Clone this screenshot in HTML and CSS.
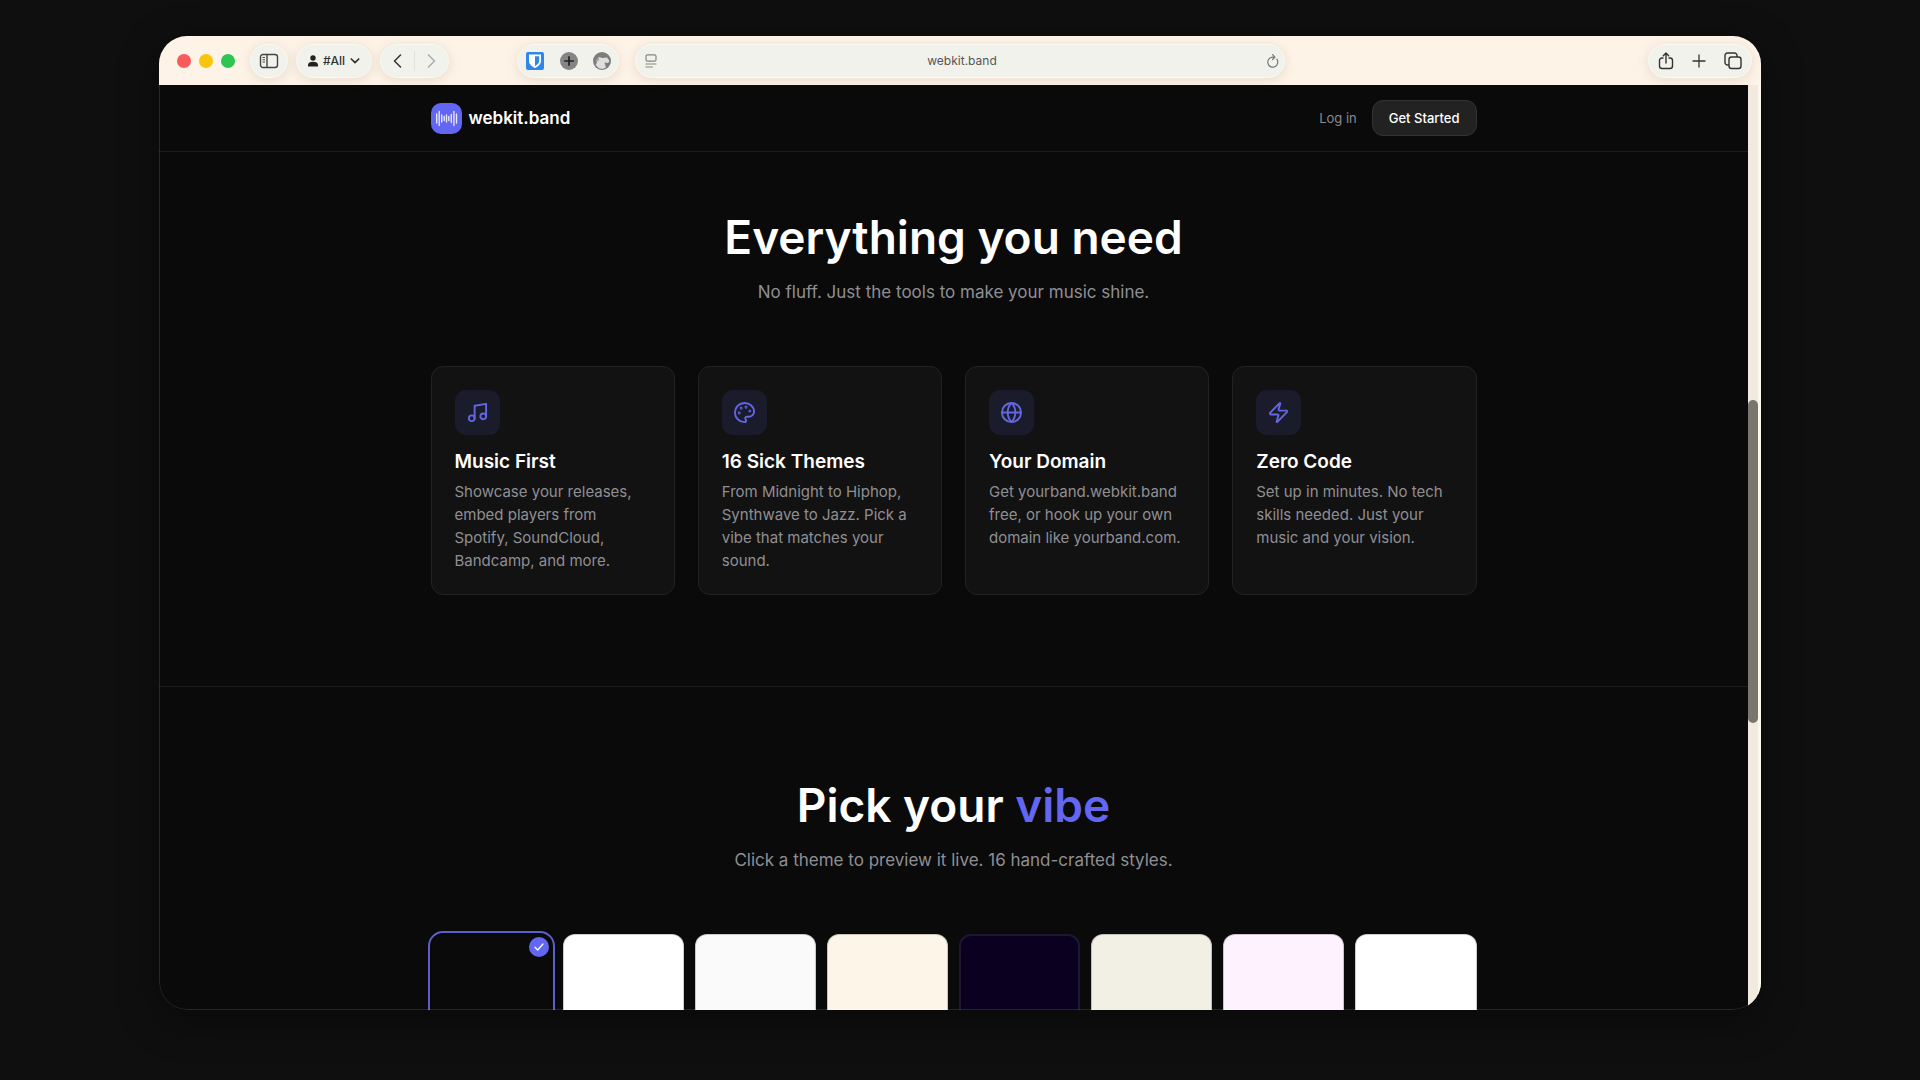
FILE: index.html
```html
<!DOCTYPE html>
<html lang="en">
<head>
    <meta charset="UTF-8">
    <meta name="viewport" content="width=device-width, initial-scale=1.0">
    <title>webkit.band</title>
    <link rel="stylesheet" href="styles.css">
</head>
<body>
    <div class="window">
        <!-- Browser toolbar -->
        <div class="toolbar">
            <div class="toolbar-left">
                <div class="lights">
                    <span class="dot red"></span>
                    <span class="dot yellow"></span>
                    <span class="dot green"></span>
                </div>
                <button class="pill pill-sidebar" aria-label="Sidebar">
                    <svg width="20" height="16" viewBox="0 0 20 16" fill="none" stroke="#444" stroke-width="1.4"><rect x="1.5" y="1.5" width="17" height="13" rx="2.5"/><path d="M8 1.5v13"/><path d="M3.5 4.5h2.5M3.5 6.8h2.5M3.5 9h2.5" stroke-width="1"/></svg>
                </button>
                <button class="pill pill-profile">
                    <svg width="10" height="12" viewBox="0 0 10 12" fill="#222"><circle cx="5" cy="3" r="2.7"/><path d="M0 11.5V10c0-2.2 2-3.3 5-3.3s5 1.1 5 3.3v1.5z"/></svg>
                    #All
                    <svg width="10" height="6" viewBox="0 0 10 6" fill="none" stroke="#333" stroke-width="1.7" stroke-linecap="round" stroke-linejoin="round"><path d="M1.3 1L5 4.600 8.700 1"/></svg>
                </button>
                <div class="pill pill-history">
                    <button aria-label="Back"><svg width="9" height="14" viewBox="0 0 9 14" fill="none" stroke="#333" stroke-width="1.5" stroke-linecap="round" stroke-linejoin="round"><path d="M7.5 1l-6 6 6 6"/></svg></button>
                    <span class="separator"></span>
                    <button aria-label="Forward"><svg width="9" height="14" viewBox="0 0 9 14" fill="none" stroke="#aaa" stroke-width="1.5" stroke-linecap="round" stroke-linejoin="round"><path d="M1.5 1l6 6-6 6"/></svg></button>
                </div>
                <div class="pill pill-extensions">
                    <button aria-label="Password manager"><svg width="18" height="18" viewBox="0 0 18 18"><rect width="18" height="18" rx="2" fill="#2f87e8"/><path d="M3 2.5h12V9c0 3.2-3 5.5-6 7-3-1.5-6-3.8-6-7z" fill="#fff"/><path d="M9 4.2h4.2v4.9c0 2-1.9 3.7-4.2 4.9z" fill="#2f87e8"/></svg></button>
                    <button aria-label="Add"><svg width="18" height="18" viewBox="0 0 18 18"><circle cx="9" cy="9" r="9" fill="#858585"/><path d="M9 4.2v9.6M4.2 9h9.6" stroke="#222" stroke-width="1.7"/></svg></button>
                    <button aria-label="Extension"><svg width="18" height="18" viewBox="0 0 18 18"><circle cx="9" cy="9" r="9" fill="#7c7c7c"/><path d="M5.500 5l4 1 4.500-.5 2.500 3.500-1.500 2-3.500-.5 1.500 5-3.500 1.500-4-1-2.800-3L4 10z" fill="#dedede"/><path d="M2 10l3.500-5 1 3z" fill="#aaa"/></svg></button>
                </div>
            </div>
            <div class="address">
                <svg width="12" height="14" viewBox="0 0 12 14" fill="none" stroke="#858580" stroke-width="1.2" stroke-linecap="round"><rect x="1" y=".8" width="10" height="6.4" rx="1.5"/><path d="M1 10h10M1 13h6.5"/></svg>
                <input type="text" value="webkit.band" aria-label="Address">
                <svg width="12" height="14" viewBox="0 0 12 14" fill="none" stroke="#777" stroke-width="1.2" stroke-linecap="round" stroke-linejoin="round"><path d="M9.8 5.2A5 5 0 1 1 6 3.2h1.5M5.600.7l2.300 2.500-2.300 2.300"/></svg>
            </div>
            <div class="toolbar-right">
                <div class="pill pill-actions">
                    <button aria-label="Share"><svg width="16" height="18" viewBox="0 0 16 18" fill="none" stroke="#333" stroke-width="1.4" stroke-linecap="round" stroke-linejoin="round"><path d="M5 6H4a2.5 2.5 0 0 0-2.500 2.500V14A2.500 2.500 0 0 0 4 16.500h8a2.500 2.500 0 0 0 2.500-2.500V8.500A2.500 2.500 0 0 0 12 6h-1M8 11V1.200M5.300 3.700L8 1.100l2.700 2.600"/></svg></button>
                    <button aria-label="New tab"><svg width="14" height="14" viewBox="0 0 14 14" fill="none" stroke="#333" stroke-width="1.3" stroke-linecap="round"><path d="M7 1v12M1 7h12"/></svg></button>
                    <button aria-label="Tabs"><svg width="18" height="18" viewBox="0 0 18 18" fill="none" stroke="#333" stroke-width="1.4" stroke-linejoin="round"><rect x="5" y="5" width="12" height="11.5" rx="2.5"/><path d="M5 13H3.500A2.500 2.500 0 0 1 1 10.500v-7A2.500 2.500 0 0 1 3.500 1h7A2.500 2.500 0 0 1 13 3.500V5"/></svg></button>
                </div>
            </div>
        </div>

        <div class="viewport">
            <div class="page">
                <header class="nav">
                    <div class="container nav-inner">
                        <a class="logo" href="#">
                            <svg width="31" height="31" viewBox="0 0 31 31"><rect width="31" height="31" rx="10" fill="#6366f1"/><path d="M5.7 11v9M8.2 8.500v14M10.700 12v7M13.200 13.500v4M15.500 12v7M17.800 13.500v4M20.300 11.500v8M22.900 8.500v14M25.500 11v9" stroke="#e6e7ff" stroke-width="1.4" stroke-linecap="round"/></svg>
                            webkit.band
                        </a>
                        <nav class="nav-links">
                            <a class="login" href="#">Log in</a>
                            <a class="get-started" href="#">Get Started</a>
                        </nav>
                    </div>
                </header>

                <section class="features">
                    <div class="container">
                        <h2>Everything you need</h2>
                        <p class="subtitle">No fluff. Just the tools to make your music shine.</p>
                        <div class="cards">
                            <div class="card">
                                <div class="icon">
                                    <svg viewBox="0 0 24 24"><path d="M9 18V5l12-2v13"/><circle cx="6" cy="18" r="3"/><circle cx="18" cy="16" r="3"/></svg>
                                </div>
                                <h3>Music First</h3>
                                <p>Showcase your releases, embed players from Spotify, SoundCloud, Bandcamp, and more.</p>
                            </div>
                            <div class="card">
                                <div class="icon">
                                    <svg viewBox="0 0 24 24"><circle cx="13.5" cy="6.5" r=".5"/><circle cx="17.5" cy="10.5" r=".5"/><circle cx="8.5" cy="7.5" r=".5"/><circle cx="6.5" cy="12.5" r=".5"/><path d="M12 2C6.5 2 2 6.5 2 12s4.5 10 10 10c.926 0 1.648-.746 1.648-1.688 0-.437-.18-.835-.437-1.125-.29-.289-.438-.652-.438-1.125a1.640 1.640 0 0 1 1.668-1.668h1.996c3.051 0 5.555-2.503 5.555-5.554C21.965 6.012 17.461 2 12 2z"/></svg>
                                </div>
                                <h3>16 Sick Themes</h3>
                                <p>From Midnight to Hiphop, Synthwave to Jazz. Pick a vibe that matches your sound.</p>
                            </div>
                            <div class="card">
                                <div class="icon">
                                    <svg viewBox="0 0 24 24"><circle cx="12" cy="12" r="10"/><path d="M12 2a14.5 14.5 0 0 0 0 20 14.5 14.5 0 0 0 0-20M2 12h20"/></svg>
                                </div>
                                <h3>Your Domain</h3>
                                <p>Get yourband.webkit.band free, or hook up your own domain like yourband.com.</p>
                            </div>
                            <div class="card">
                                <div class="icon">
                                    <svg viewBox="0 0 24 24"><path d="M4 14a1 1 0 0 1-.78-1.63l9.9-10.2a.5.5 0 0 1 .86.46l-1.92 6.02A1 1 0 0 0 13 10h7a1 1 0 0 1 .78 1.63l-9.9 10.2a.5.5 0 0 1-.86-.46l1.92-6.02A1 1 0 0 0 11 14z"/></svg>
                                </div>
                                <h3>Zero Code</h3>
                                <p>Set up in minutes. No tech skills needed. Just your music and your vision.</p>
                            </div>
                        </div>
                    </div>
                </section>

                <section class="themes">
                    <div class="container">
                        <h2>Pick your <span class="accent">vibe</span></h2>
                        <p class="subtitle">Click a theme to preview it live. 16 hand-crafted styles.</p>
                        <div class="theme-grid">
                            <button class="theme midnight selected" aria-label="Theme 1">
                                <span class="check"><svg width="10" height="8" viewBox="0 0 10 8" fill="none" stroke="#fff" stroke-width="1.3" stroke-linecap="round" stroke-linejoin="round"><path d="M1 4.2L3.700 7 9 1"/></svg></span>
                            </button>
                            <button class="theme white" aria-label="Theme 2"></button>
                            <button class="theme light" aria-label="Theme 3"></button>
                            <button class="theme cream" aria-label="Theme 4"></button>
                            <button class="theme synthwave" aria-label="Theme 5"></button>
                            <button class="theme sage" aria-label="Theme 6"></button>
                            <button class="theme pink" aria-label="Theme 7"></button>
                            <button class="theme white" aria-label="Theme 8"></button>
                        </div>
                    </div>
                </section>
            </div>
            <div class="scrollbar">
                <div class="thumb"></div>
            </div>
        </div>
    </div>
</body>
</html>
```

FILE: styles.css
```css
* {
    box-sizing: border-box;
}
body {
    margin: 0;
    height: 100vh;
    padding: 36px 159px 70px;
    display: flex;
    background-color: #0f0f0f;
    font-family: Inter, "Liberation Sans", sans-serif;
    color: #fff;
}
button {
    font: inherit;
    color: inherit;
    padding: 0;
    border: none;
    background: none;
    cursor: pointer;
}
a {
    color: inherit;
    text-decoration: none;
}
svg {
    display: block;
    flex: none;
}
h2, h3, p {
    margin: 0;
}

/* Window */
.window {
    position: relative;
    flex: 1;
    min-width: 0;
    display: flex;
    flex-direction: column;
    overflow: hidden;
    border-radius: 28px;
    background-color: #0a0a0a;
    box-shadow: 0 10px 40px rgba(0, 0, 0, 0.4);
}
.window::after {
    content: "";
    position: absolute;
    inset: 0;
    border: 1px solid rgba(255, 255, 255, 0.12);
    border-radius: 28px;
    pointer-events: none;
}

/* Toolbar */
.toolbar {
    flex: none;
    height: 49px;
    display: grid;
    grid-template-columns: 1fr minmax(0, 650px) 1fr;
    align-items: center;
    background-color: #fdf3e7;
    color: #333;
}
.toolbar-left {
    display: flex;
    align-items: center;
    gap: 8px;
    padding: 0 16px 0 18px;
}
.toolbar-right {
    display: flex;
    justify-content: flex-end;
    padding-right: 9px;
}
.lights {
    display: flex;
    gap: 8px;
    margin-right: 7px;
}
.dot {
    width: 14px;
    height: 14px;
    border-radius: 50%;
}
.red {
    background-color: #fb5a5c;
}
.yellow {
    background-color: #f8c50c;
}
.green {
    background-color: #2dc653;
}
.pill, .address {
    height: 34px;
    display: flex;
    align-items: center;
    border: 1px solid #faf8ef;
    border-radius: 17px;
    background-color: #f2f2ed;
    box-shadow: 0 2px 12px rgba(120, 100, 70, 0.16);
}
.pill button {
    display: flex;
}
.pill-sidebar {
    width: 38px;
    justify-content: center;
}
.pill-profile {
    width: 76px;
    justify-content: center;
    gap: 5px;
    font-size: 12px;
    font-weight: 500;
}
.pill-history {
    width: 69px;
    justify-content: space-between;
    padding: 0 12px;
}
.separator {
    width: 1px;
    height: 20px;
    background-color: #e2e1dc;
}
.pill-extensions {
    width: 102px;
    justify-content: space-between;
    margin-left: auto;
    padding: 0 7px 0 8px;
}
.address {
    padding: 0 5px 0 9px;
}
.address input {
    flex: 1;
    min-width: 0;
    padding: 0;
    border: none;
    outline: none;
    background: none;
    font: inherit;
    font-size: 12px;
    color: #555;
    text-align: center;
}
.pill-actions {
    width: 104px;
    justify-content: space-between;
    padding: 0 9px;
}
.pill-actions button {
    align-items: center;
}

/* Page */
.viewport {
    flex: 1;
    min-height: 0;
    display: flex;
}
.page {
    flex: 1;
    min-width: 0;
    overflow: hidden;
}
.container {
    max-width: 1046px;
    margin: 0 auto;
}
.scrollbar {
    position: relative;
    flex: none;
    width: 13px;
    background-color: #f3eadf;
    border-right: 3px solid #fdf7ee;
}
.thumb {
    position: absolute;
    top: 34%;
    left: 0;
    width: 10px;
    height: 35%;
    border-radius: 5px;
    background-color: #7a766f;
}
.nav {
    border-bottom: 1px solid #1c1c1c;
}
.nav-inner {
    height: 66px;
    display: flex;
    align-items: center;
    justify-content: space-between;
}
.logo {
    display: flex;
    align-items: center;
    gap: 7px;
    font-size: 17px;
    font-weight: 600;
}
.nav-links {
    display: flex;
    align-items: center;
    gap: 15px;
    font-size: 13px;
}
.login {
    color: #8b8b90;
}
.get-started {
    height: 36px;
    display: flex;
    align-items: center;
    padding: 0 16px;
    border: 1px solid #333;
    border-radius: 11px;
    background-color: #222;
    font-weight: 500;
}
h2 {
    font-size: 46px;
    line-height: 52px;
    font-weight: 600;
    text-align: center;
}
.accent {
    color: #6366f1;
}
.subtitle {
    margin-top: 16px;
    font-size: 17px;
    line-height: 26px;
    color: #8f8f94;
    text-align: center;
}
.features {
    padding: 59px 0 91px;
    border-bottom: 1px solid #1c1c1c;
}
.cards {
    display: grid;
    grid-template-columns: repeat(4, 1fr);
    gap: 23px;
    margin-top: 61px;
}
.card {
    padding: 23px 23px 22px;
    border: 1px solid #222;
    border-radius: 12px;
    background-color: #121212;
}
.icon {
    width: 45px;
    height: 45px;
    display: flex;
    align-items: center;
    justify-content: center;
    border-radius: 11px;
    background-color: #1a1b2b;
}
.icon svg {
    width: 23px;
    height: 23px;
    fill: none;
    stroke: #6366e0;
    stroke-width: 2;
    stroke-linecap: round;
    stroke-linejoin: round;
}
.card h3 {
    margin-top: 13px;
    font-size: 19px;
    line-height: 28px;
    font-weight: 600;
}
.card p {
    margin-top: 4px;
    font-size: 15px;
    line-height: 23px;
    color: #8f8f94;
}
.themes {
    padding-top: 92px;
}
.theme-grid {
    display: grid;
    grid-template-columns: repeat(8, 1fr);
    gap: 11px;
    margin-top: 61px;
}
.theme {
    position: relative;
    height: 160px;
    border: 1px solid rgba(0, 0, 0, 0.2);
    border-radius: 12px;
}
.selected {
    outline: 2px solid #5c5fc9;
    outline-offset: 1px;
}
.check {
    position: absolute;
    top: 2px;
    right: 2px;
    width: 20px;
    height: 20px;
    display: flex;
    align-items: center;
    justify-content: center;
    border-radius: 50%;
    background-color: #6366f1;
}
.midnight {
    background-color: #0a0a0a;
}
.white {
    background-color: #fff;
}
.light {
    background-color: #fafafa;
}
.cream {
    background-color: #fdf5e8;
}
.synthwave {
    background-color: #0b001f;
    border: 2px solid #1d1830;
}
.sage {
    background-color: #f2f0e4;
}
.pink {
    background-color: #fdf2fd;
}
```
